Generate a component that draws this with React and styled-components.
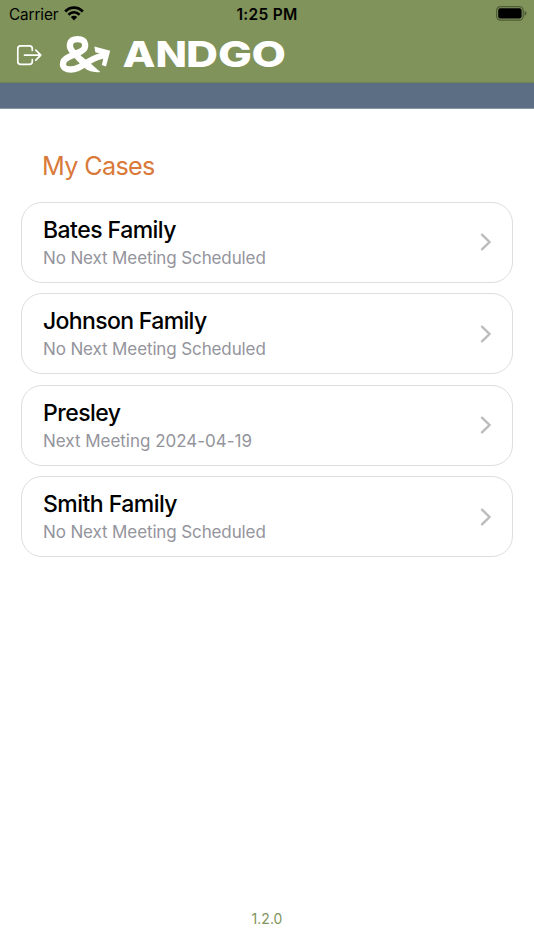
import React from "react";
import styled, { createGlobalStyle } from "styled-components";

const GlobalStyle = createGlobalStyle`
  * { box-sizing: border-box; }
  body { margin: 0; background: #fff; font-family: Inter, "Liberation Sans", sans-serif; }
`;

const Screen = styled.div`
  width: 534px;
  height: 950px;
  display: flex;
  flex-direction: column;
  background: #fff;
`;

const Header = styled.header`
  height: 83px;
  flex: none;
  background: #80935b;
  border-bottom: 1px solid #728258;
`;

const StatusBar = styled.div`
  height: 28px;
  display: grid;
  grid-template-columns: 1fr auto 1fr;
  align-items: center;
  padding: 0 7px 0 9px;
  font-size: 15.5px;
  line-height: 28px;
  color: #000;
`;

const Carrier = styled.div`
  display: flex;
  align-items: center;
  gap: 6px;
  font-size: 15.3px;
  line-height: 26px;
  letter-spacing: -0.1px;
  padding-top: 1px;
  svg { margin-top: -3px; }
`;

const Clock = styled.div`
  font-weight: 600;
  font-size: 15.5px;
  line-height: 26px;
  letter-spacing: 0.3px;
  margin-right: 2px;
  padding-top: 2px;
`;

const BatterySlot = styled.div`
  display: flex;
  justify-content: flex-end;
  svg { margin-top: -2px; }
`;

const NavBar = styled.nav`
  display: flex;
  align-items: flex-start;
  height: 54px;
  padding: 6px 0 0 16px;
`;

const ExitButton = styled.button`
  width: 28px;
  height: 42px;
  padding: 0;
  border: 0;
  background: none;
  margin-right: 12px;
  svg { display: block; }
`;

const Band = styled.div`
  height: 26px;
  flex: none;
  background: #5b6e83;
  border-bottom: 1px solid #8795a4;
`;

const Content = styled.main`
  flex: 1;
  padding: 41px 21px 0;
`;

const Title = styled.h1`
  margin: 0 0 18.7px 21px;
  font-size: 25.2px;
  line-height: 33px;
  font-weight: 400;
  letter-spacing: -0.65px;
  color: #d9793a;
`;

const CaseList = styled.div`
  display: flex;
  flex-direction: column;
  gap: 10.5px;
`;

const CaseCard = styled.div`
  height: 81px;
  display: flex;
  align-items: center;
  justify-content: space-between;
  padding: 0 20px 0 21px;
  border: 1px solid #dedede;
  border-radius: 21px;
`;

const CaseText = styled.div`
  padding-top: 1.6px;
`;

const CaseName = styled.div`
  font-size: 23px;
  line-height: 30px;
  font-weight: 500;
  letter-spacing: ${(p) => p.$tracking}px;
  color: #000;
`;

const CaseMeeting = styled.div`
  font-size: 17px;
  line-height: 26px;
  letter-spacing: ${(p) => p.$tracking}px;
  color: #94949c;
`;

const Version = styled.footer`
  height: 43px;
  text-align: center;
  font-size: 14px;
  line-height: 24px;
  color: #80935b;
`;

const cases = [
  { name: "Bates Family", meeting: "No Next Meeting Scheduled", tracking: -0.53, sub: -0.12 },
  { name: "Johnson Family", meeting: "No Next Meeting Scheduled", tracking: -0.65, sub: -0.12 },
  { name: "Presley", meeting: "Next Meeting 2024-04-19", tracking: -0.53, sub: -0.02 },
  { name: "Smith Family", meeting: "No Next Meeting Scheduled", tracking: -0.53, sub: -0.12 },
];

const Wifi = () => (
  <svg width="20" height="15" viewBox="0 0 20 15" fill="none" stroke="#000">
    <path d="M1.2 5.4C6.2.3 13.8.3 18.8 5.4" strokeWidth="2.8" />
    <path d="M4.4 8.7C7.8 5.5 12.2 5.5 15.6 8.7" strokeWidth="2.6" />
    <path d="M6.8 11.1Q10 8.5 13.2 11.1L10 14.4Z" fill="#000" stroke="none" />
  </svg>
);

const Battery = () => (
  <svg width="31" height="15" viewBox="0 0 31 15">
    <rect x="0.6" y="0.6" width="26.6" height="13.6" rx="4" fill="none" stroke="#4e5c37" strokeWidth="1.2" />
    <rect x="2.2" y="2.2" width="23.4" height="10.4" rx="2.3" fill="#000" />
    <path d="M28.5 5Q30.5 5.5 30.5 7.4T28.5 9.8Z" fill="#4e5c37" />
  </svg>
);

const Exit = () => (
  <svg width="28" height="42" viewBox="16 34 28 42" fill="none" stroke="#fff" strokeWidth="1.7" strokeLinecap="round" strokeLinejoin="round">
    <path d="M32.3 50.5V48.7Q32.3 45.8 29.4 45.8H20.7Q17.8 45.8 17.8 48.7V61.5Q17.8 64.4 20.7 64.4H29.4Q32.3 64.4 32.3 61.5V59.7" />
    <path d="M24.5 55.1H40.8M35.8 50.1L40.8 55.1L35.8 60.1" />
  </svg>
);

const Logo = () => (
  <svg width="232" height="42" viewBox="56 34 232 42">
    <path
      d="M84 63.3L72.5 51.4C68 46.5 69 39.2 77.5 39.2C87 39.2 87.3 48.3 80.5 51.6L69.5 56.7C60.5 60.8 60.5 69.5 71 69.5C83 69.5 84.5 60 103 55.5"
      fill="none" stroke="#fff" strokeWidth="6.3"
    />
    <path d="M82 56.8L91.5 64.3L100.3 72C93 72.8 88 71 84 67.5L79 62Z" fill="#fff" />
    <path d="M94.4 46.4L110.2 50.7L106 66.4L101.8 65.1L103.3 58.8L99 57L100 53.5L95.3 52.2Z" fill="#fff" />
    <text y="67.3" fill="#fff" fontFamily="Inter, sans-serif" fontWeight="800" fontSize="35.5">
      <tspan x="122.5" textLength="33" lengthAdjust="spacingAndGlyphs">A</tspan>
      <tspan x="155.5" textLength="31.5" lengthAdjust="spacingAndGlyphs">N</tspan>
      <tspan x="186" textLength="32" lengthAdjust="spacingAndGlyphs">D</tspan>
      <tspan x="218" textLength="34" lengthAdjust="spacingAndGlyphs">G</tspan>
      <tspan x="251.5" textLength="34.5" lengthAdjust="spacingAndGlyphs">O</tspan>
    </text>
  </svg>
);

const Chevron = () => (
  <svg width="12" height="18" viewBox="0 0 12 18" fill="none" stroke="#bcbcbe" strokeWidth="2.4" strokeLinecap="round">
    <path d="M2 1.7L9.5 9L2 16.3" />
  </svg>
);

export default function App() {
  return (
    <Screen>
      <GlobalStyle />
      <Header>
        <StatusBar>
          <Carrier>Carrier<Wifi /></Carrier>
          <Clock>1:25 PM</Clock>
          <BatterySlot><Battery /></BatterySlot>
        </StatusBar>
        <NavBar>
          <ExitButton aria-label="Log out"><Exit /></ExitButton>
          <Logo />
        </NavBar>
      </Header>
      <Band />
      <Content>
        <Title>My Cases</Title>
        <CaseList>
          {cases.map((c) => (
            <CaseCard key={c.name}>
              <CaseText>
                <CaseName $tracking={c.tracking}>{c.name}</CaseName>
                <CaseMeeting $tracking={c.sub}>{c.meeting}</CaseMeeting>
              </CaseText>
              <Chevron />
            </CaseCard>
          ))}
        </CaseList>
      </Content>
      <Version>1.2.0</Version>
    </Screen>
  );
}
